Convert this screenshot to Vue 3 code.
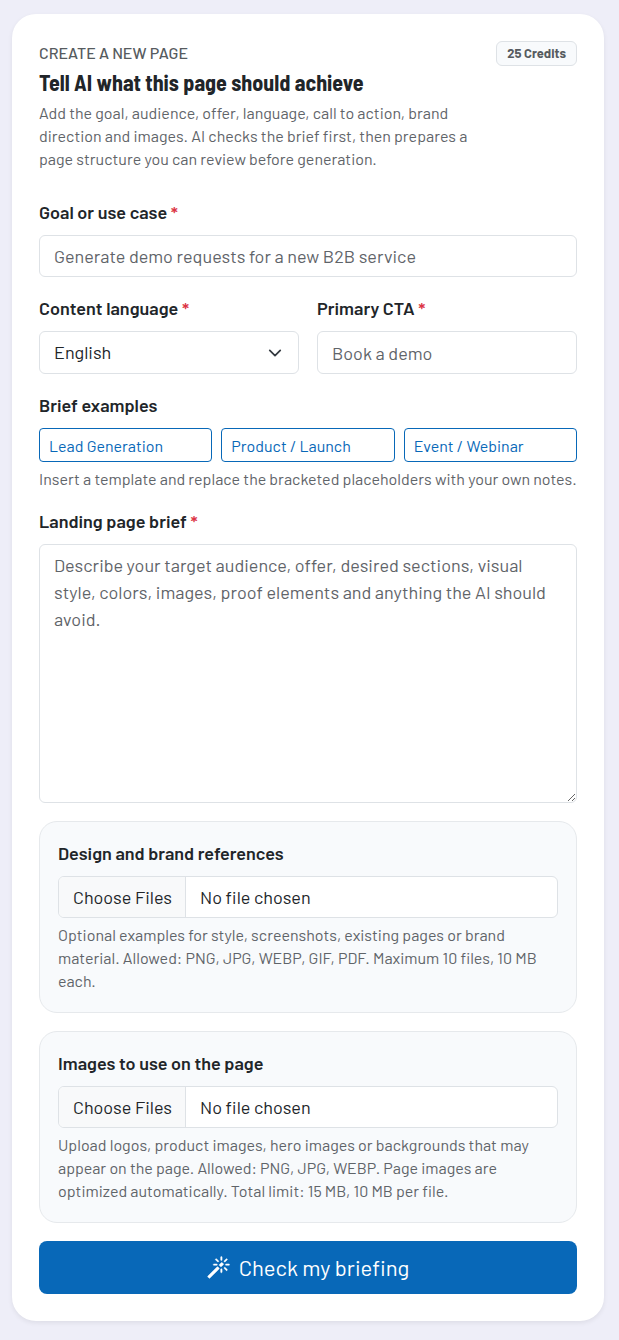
<script setup>
import { ref } from 'vue'

const goal = ref('')
const language = ref('English')
const cta = ref('')
const brief = ref('')

const templates = [
  { label: 'Lead Generation', text: 'Audience: [audience]\nOffer: [offer]\nLead form: [fields]' },
  { label: 'Product / Launch', text: 'Product: [product]\nBenefits: [benefits]\nLaunch date: [date]' },
  { label: 'Event / Webinar', text: 'Event: [title]\nDate: [date]\nSpeakers: [speakers]' }
]

const uploads = [
  {
    id: 'references',
    label: 'Design and brand references',
    accept: '.png,.jpg,.webp,.gif,.pdf',
    hint: 'Optional examples for style, screenshots, existing pages or brand material. Allowed: PNG, JPG, WEBP, GIF, PDF. Maximum 10 files, 10 MB each.'
  },
  {
    id: 'images',
    label: 'Images to use on the page',
    accept: '.png,.jpg,.webp',
    hint: 'Upload logos, product images, hero images or backgrounds that may appear on the page. Allowed: PNG, JPG, WEBP. Page images are optimized automatically. Total limit: 15 MB, 10 MB per file.'
  }
]
</script>

<template>
  <main class="page">
    <form class="card" @submit.prevent>
      <header class="intro">
        <div class="intro-top">
          <p class="eyebrow">CREATE A NEW PAGE</p>
          <span class="badge">25 Credits</span>
        </div>
        <h1 class="title">Tell AI what this page should achieve</h1>
        <p class="lead">
          Add the goal, audience, offer, language, call to action, brand direction and images. AI checks the brief first, then prepares a page structure you can review before generation.
        </p>
      </header>

      <div class="field">
        <label class="label" for="goal">Goal or use case <span class="required">*</span></label>
        <input id="goal" v-model="goal" class="control" type="text" placeholder="Generate demo requests for a new B2B service">
      </div>

      <div class="row">
        <div class="field">
          <label class="label" for="language">Content language <span class="required">*</span></label>
          <div class="select-wrap">
            <select id="language" v-model="language" class="control select">
              <option>English</option>
              <option>German</option>
            </select>
            <svg class="chevron" viewBox="0 0 16 16" aria-hidden="true">
              <path d="m2 5 6 6 6-6" fill="none" stroke="#343a40" stroke-width="2" stroke-linecap="round" stroke-linejoin="round" />
            </svg>
          </div>
        </div>
        <div class="field">
          <label class="label" for="cta">Primary CTA <span class="required">*</span></label>
          <input id="cta" v-model="cta" class="control" type="text" placeholder="Book a demo">
        </div>
      </div>

      <div class="field" role="group" aria-labelledby="examples">
        <div id="examples" class="label">Brief examples</div>
        <div class="templates">
          <button v-for="t in templates" :key="t.label" type="button" class="template" @click="brief = t.text">{{ t.label }}</button>
        </div>
        <p class="hint">Insert a template and replace the bracketed placeholders with your own notes.</p>
      </div>

      <div class="field">
        <label class="label" for="brief">Landing page brief <span class="required">*</span></label>
        <textarea id="brief" v-model="brief" class="control area" placeholder="Describe your target audience, offer, desired sections, visual style, colors, images, proof elements and anything the AI should avoid."></textarea>
      </div>

      <section v-for="u in uploads" :key="u.id" class="field upload">
        <label class="label" :for="u.id">{{ u.label }}</label>
        <input :id="u.id" class="control file" type="file" multiple :accept="u.accept">
        <p class="hint">{{ u.hint }}</p>
      </section>

      <button class="submit" type="submit">
        <svg class="wand" viewBox="0 0 16 16" fill="currentColor" aria-hidden="true">
          <path d="M9.5 2.672a.5.5 0 1 0 1 0V.843a.5.5 0 0 0-1 0v1.829Zm4.5.035A.5.5 0 0 0 13.293 2L12 3.293a.5.5 0 1 0 .707.707L14 2.707ZM7.293 4A.5.5 0 1 0 8 3.293L6.707 2A.5.5 0 0 0 6 2.707L7.293 4Zm-.621 2.5a.5.5 0 1 0 0-1H4.843a.5.5 0 1 0 0 1h1.829Zm8.485 0a.5.5 0 1 0 0-1h-1.829a.5.5 0 0 0 0 1h1.829ZM13.293 10A.5.5 0 1 0 14 9.293L12.707 8a.5.5 0 1 0-.707.707L13.293 10ZM9.5 11.157a.5.5 0 0 0 1 0V9.328a.5.5 0 0 0-1 0v1.829Zm1.854-5.097a.5.5 0 0 0 0-.706l-.708-.708a.5.5 0 0 0-.707 0L8.646 5.94a.5.5 0 0 0 0 .707l.708.708a.5.5 0 0 0 .707 0l1.293-1.293Zm-3 3a.5.5 0 0 0 0-.706l-.708-.708a.5.5 0 0 0-.707 0L.646 13.94a.5.5 0 0 0 0 .707l.707.707a.5.5 0 0 0 .707 0L8.354 9.06Z" stroke="currentColor" stroke-width="0.3" />
        </svg>
        Check my briefing
      </button>
    </form>
  </main>
</template>

<style>
body {
  background: #eeeef8;
}
</style>

<style scoped>
.page {
  padding: 14px 15px 19px 12px;
  color: #212529;
  font-family: Barlow, Roboto, "Liberation Sans", sans-serif;
  font-size: 18px;
  line-height: 27px;
}
.page * {
  box-sizing: border-box;
}
.card {
  display: flex;
  flex-direction: column;
  gap: 18px;
  padding: 27px;
  border-radius: 24px;
  background: #fff;
  box-shadow: 0 2px 5px rgba(0, 0, 0, 0.07);
}
p,
h1 {
  margin: 0;
}
.intro {
  margin-bottom: 11px;
}
.intro-top {
  display: flex;
  justify-content: space-between;
  align-items: flex-start;
  height: 23px;
}
.eyebrow {
  color: #565b60;
  font-size: 16px;
  font-weight: 500;
  line-height: 23px;
}
.badge {
  padding: 0 10px;
  border: 1px solid #dee2e6;
  border-radius: 6px;
  background: #f8fafc;
  color: #565b60;
  font-size: 13px;
  font-weight: 700;
  line-height: 23px;
}
.title {
  margin-top: 5px;
  font-family: "Barlow Semi Condensed", Barlow, Roboto, sans-serif;
  font-size: 22px;
  font-weight: 700;
  line-height: 26px;
}
.lead {
  max-width: 432px;
  margin-top: 6px;
  color: #5f6469;
  font-size: 16px;
  line-height: 23px;
}
.field {
  display: flex;
  flex-direction: column;
  min-width: 0;
}
.label {
  margin-bottom: 9px;
  font-weight: 600;
}
.required {
  color: #dc3545;
}
.row {
  display: grid;
  grid-template-columns: 1fr 1fr;
  gap: 18px;
}
.control {
  display: block;
  width: 100%;
  height: 42px;
  padding: 0 14px;
  border: 1px solid #dee2e6;
  border-radius: 6px;
  background: #fff;
  color: #212529;
  font: inherit;
}
.row .control {
  height: 43px;
}
.control::placeholder {
  color: #5f6469;
  opacity: 1;
}
.select-wrap {
  position: relative;
}
.select {
  appearance: none;
}
.chevron {
  position: absolute;
  top: 15px;
  right: 17px;
  width: 14px;
  height: 14px;
  pointer-events: none;
}
.templates {
  display: grid;
  grid-template-columns: repeat(3, 1fr);
  gap: 9px;
}
.template {
  height: 34px;
  padding: 0 9px;
  border: 1px solid #0868b8;
  border-radius: 4px;
  background: #fff;
  color: #0868b8;
  font: inherit;
  font-size: 16px;
  text-align: left;
}
.hint {
  margin-top: 5px;
  color: #5f6469;
  font-size: 16px;
  line-height: 23px;
}
.area {
  height: 259px;
  padding: 7px 14px;
  resize: vertical;
}
.upload {
  padding: 18px 18px 20px;
  border: 1px solid #e6e9ec;
  border-radius: 18px;
  background: #f8fafc;
}
.file {
  padding: 0;
  overflow: hidden;
  line-height: 40px;
}
.file::file-selector-button {
  height: 40px;
  margin: 0 14px 0 0;
  padding: 0 13px 0 14px;
  border: 0;
  border-right: 1px solid #dee2e6;
  border-radius: 0;
  background: #f8f9fa;
  color: #212529;
  font: inherit;
}
.submit {
  display: flex;
  align-items: center;
  justify-content: center;
  gap: 9px;
  height: 53px;
  border: 0;
  border-radius: 8px;
  background: #0868b8;
  color: #fff;
  font: inherit;
  font-size: 22px;
}
.wand {
  width: 23px;
  height: 23px;
  overflow: visible;
}
</style>
